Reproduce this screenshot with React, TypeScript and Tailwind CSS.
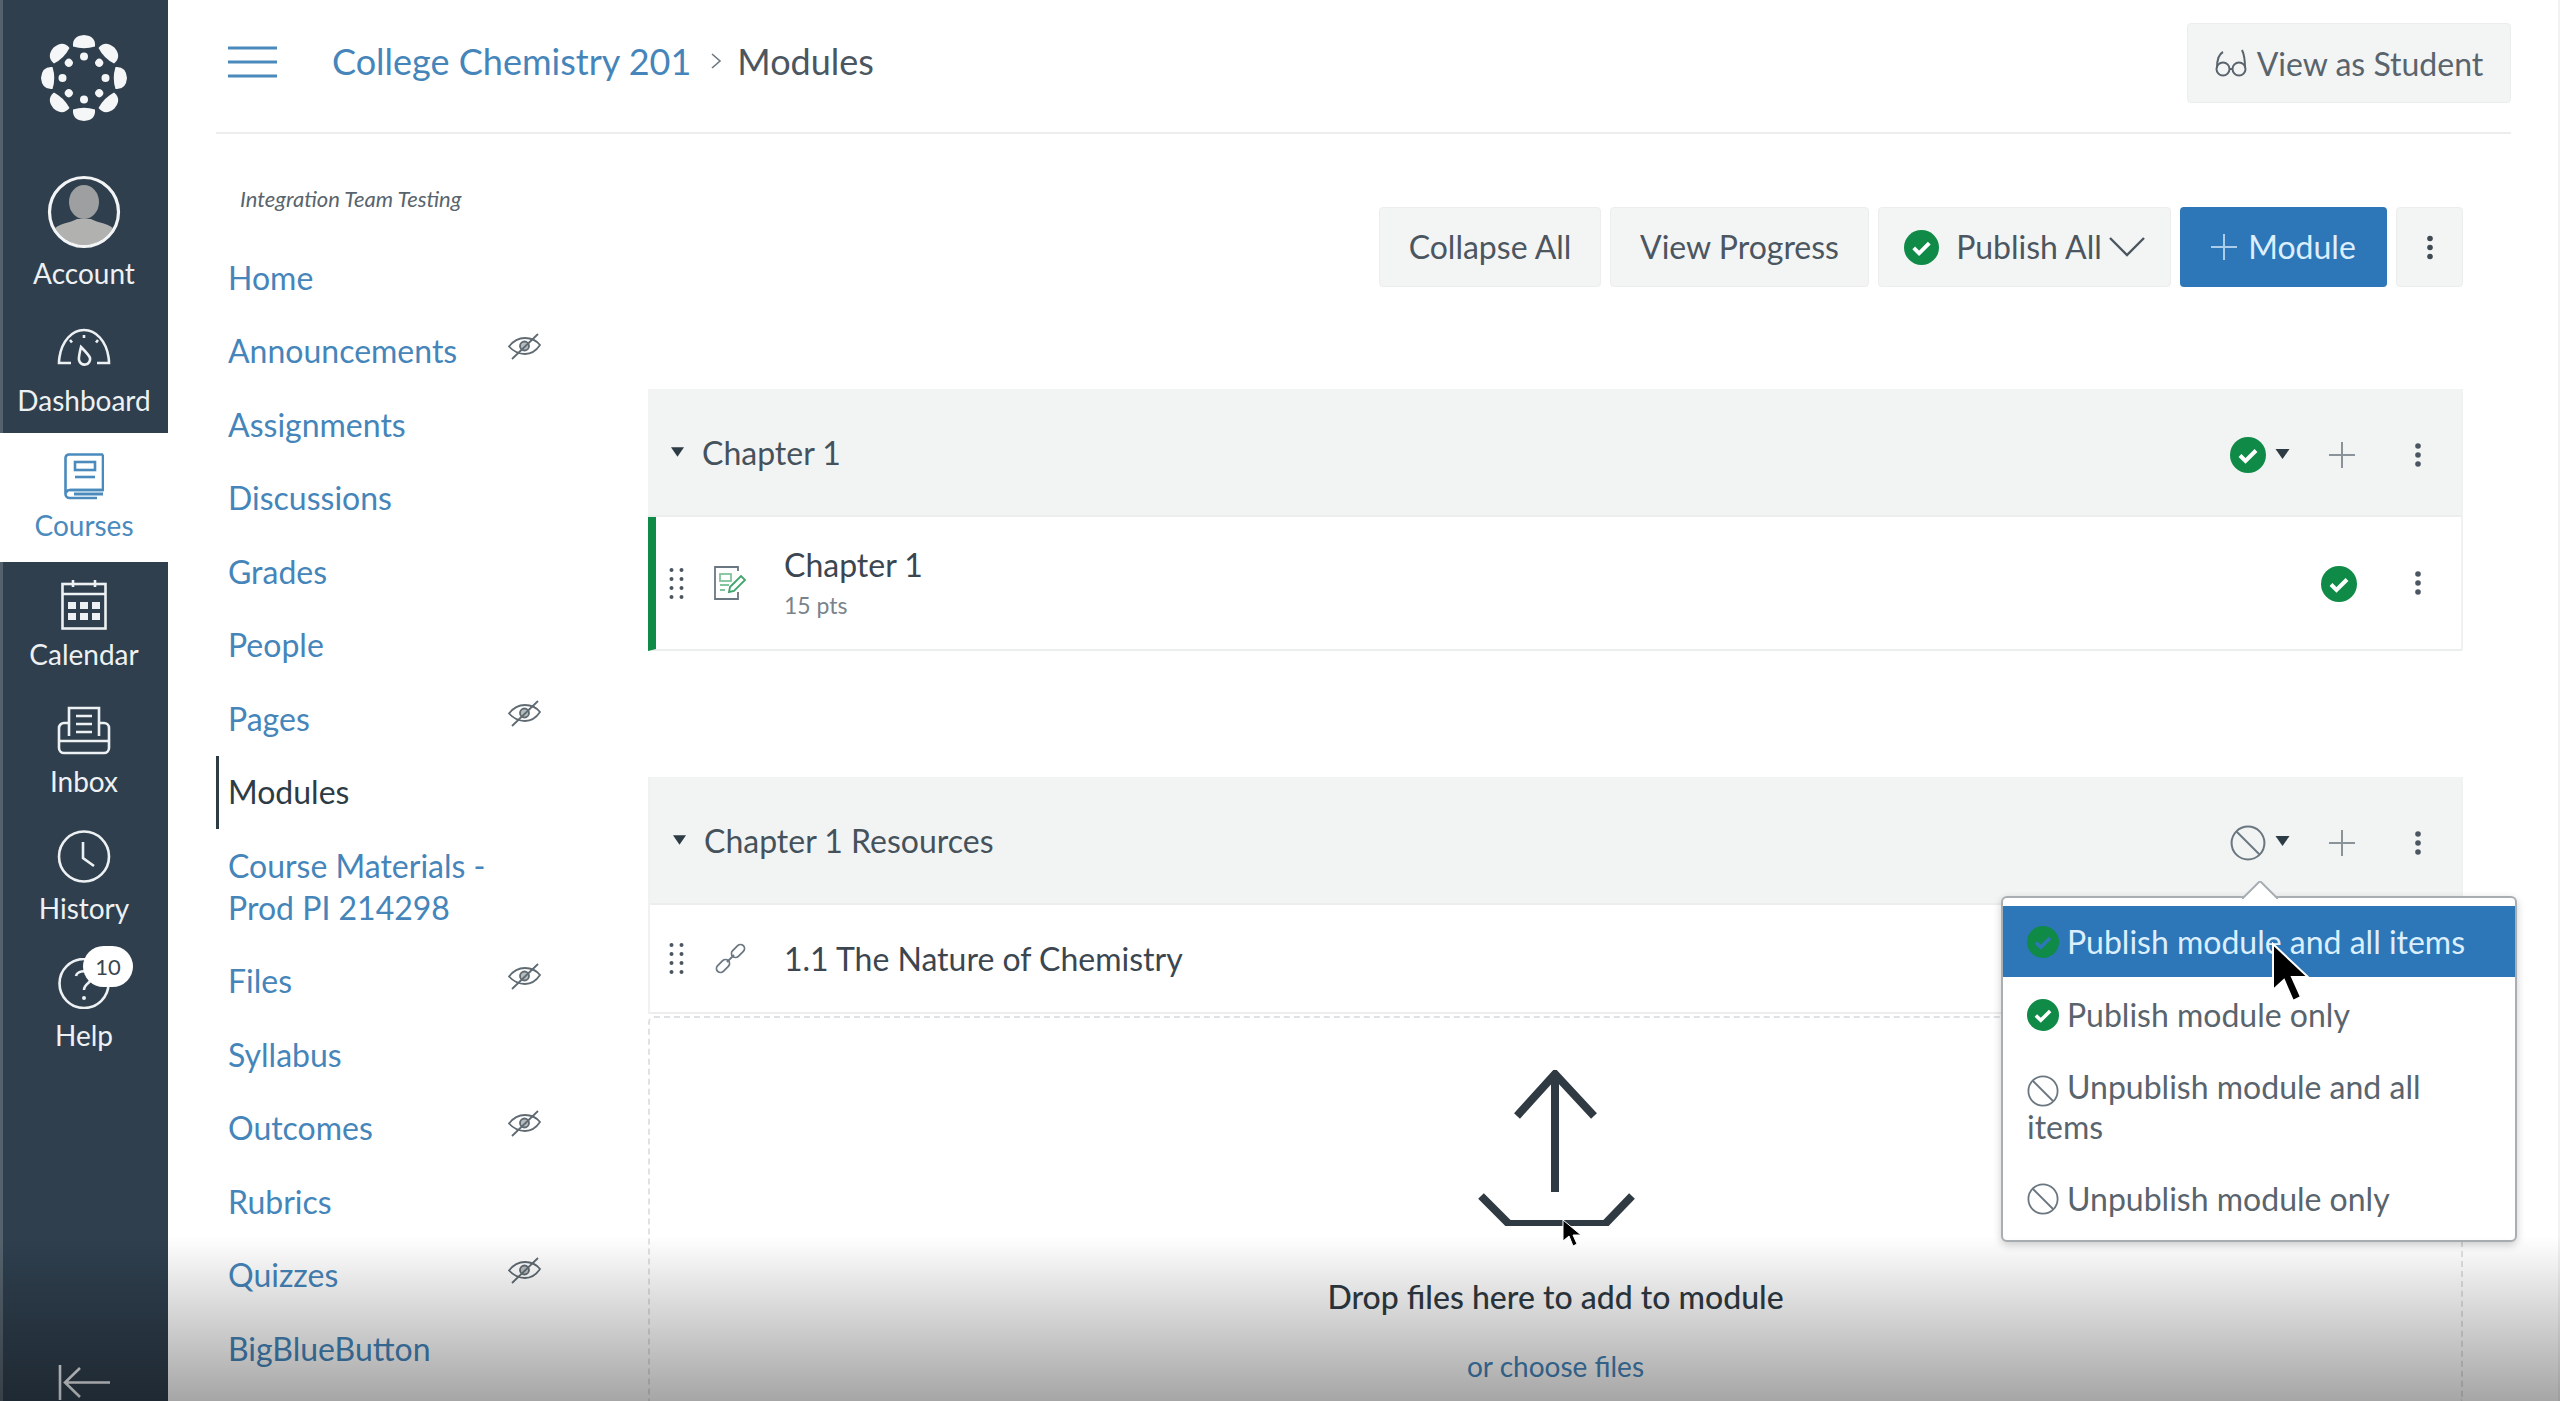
import React from "react";

const font = { fontFamily: "Lato, 'Open Sans', sans-serif" };

function CheckCircle({ size = 36, check = "#fff" }: { size?: number; check?: string }) {
  return (
    <svg width={size} height={size} viewBox="0 0 36 36" className="inline-block shrink-0 align-middle">
      <circle cx="18" cy="18" r="18" fill="#0f8a47" />
      <path d="M10 18.5l5.5 5.5L26 13.5" fill="none" stroke={check} strokeWidth="4" />
    </svg>
  );
}

function NoCircle({ size = 32 }: { size?: number }) {
  return (
    <svg width={size} height={size} viewBox="0 0 32 32" className="inline-block shrink-0 align-middle">
      <circle cx="16" cy="16" r="14.6" fill="none" stroke="#6b7780" strokeWidth="1.8" />
      <path d="M6 6l20 20" stroke="#6b7780" strokeWidth="1.8" />
    </svg>
  );
}

function Kebab({ h = 24, color = "#4b5660" }: { h?: number; color?: string }) {
  return (
    <svg width="8" height={h} viewBox="0 0 8 24" className="shrink-0">
      <circle cx="4" cy="3" r="2.8" fill={color} />
      <circle cx="4" cy="12" r="2.8" fill={color} />
      <circle cx="4" cy="21" r="2.8" fill={color} />
    </svg>
  );
}

function Plus({ color = "#8a939a", size = 26 }: { color?: string; size?: number }) {
  return (
    <svg width={size} height={size} viewBox="0 0 26 26" className="shrink-0">
      <path d="M13 0v26M0 13h26" stroke={color} strokeWidth="2" />
    </svg>
  );
}

function Caret({ w = 14, h = 10, color = "#2d3b45" }: { w?: number; h?: number; color?: string }) {
  return (
    <svg width={w} height={h} viewBox="0 0 14 10" className="shrink-0">
      <path d="M0 0h14L7 10z" fill={color} />
    </svg>
  );
}

function Drag() {
  const dots = [3, 12, 21, 30];
  return (
    <svg width="15" height="33" viewBox="0 0 15 33" className="shrink-0">
      {dots.map((y) => (
        <g key={y} fill="#4b5660">
          <circle cx="2.5" cy={y} r="2" />
          <circle cx="12.5" cy={y} r="2" />
        </g>
      ))}
    </svg>
  );
}

function EyeOff() {
  return (
    <svg width="33" height="27" viewBox="0 0 33 27" className="-mt-[10px] shrink-0" fill="none" stroke="#5f6a72" strokeWidth="1.8">
      <path d="M1 13.5C6 7 11 5 17 5s11 2 15 7c-4 6-9 9-15 9S6 19 1 13.5z" />
      <circle cx="16.5" cy="13" r="4.5" fill="#5f6a72" fillOpacity="0.45" />
      <path d="M4 26L30 1" />
    </svg>
  );
}

function CanvasLogo() {
  const a = [0, 45, 90, 135, 180, 225, 270, 315];
  return (
    <svg width="86" height="86" viewBox="-43 -43 86 86">
      {a.map((d) => (
        <g key={d} transform={`rotate(${d})`} fill="#f4f6f7">
          <path d="M-11-31.500Q-12-42 0-43Q12-42 11-31.500Q0-28-11-31.500z" />
          <circle cx="0" cy="-21.5" r="4" />
        </g>
      ))}
    </svg>
  );
}

function Avatar() {
  return (
    <svg width="74" height="74" viewBox="0 0 74 74">
      <defs>
        <clipPath id="avatar-clip">
          <circle cx="37" cy="37" r="33" />
        </clipPath>
      </defs>
      <g clipPath="url(#avatar-clip)">
        <ellipse cx="37" cy="27" rx="15" ry="17" fill="#9d9fa0" />
        <path d="M6 74V56c4-8 18-8 24-12h14c6 4 20 4 24 12v18z" fill="#b1b1b0" />
      </g>
      <circle cx="37" cy="37" r="34.5" fill="none" stroke="#f2f4f5" strokeWidth="3.2" />
    </svg>
  );
}

const iconStroke = { fill: "none", stroke: "#eef1f3", strokeWidth: 2.6 };

function DashboardIcon() {
  return (
    <svg width="54" height="38" viewBox="0 0 54 38" {...iconStroke}>
      <path d="M14 35H2c0-2 0-3 .5-6C5 13 15 2 27 2s22 11 24.500 27c.5 3 .5 4 .5 6H40" />
      <path d="M24 19c5 5 8 8 9 11a5.500 5.500 0 0 1-11 2c-.5-3 .5-7 2-13z" />
      <path d="M27 7v3M13 12l2 2.500M41 12l-2 2.500" />
    </svg>
  );
}

function CoursesIcon() {
  return (
    <svg width="40" height="47" viewBox="0 0 40 47" fill="none" stroke="#4a8abd" strokeWidth="2.6">
      <path d="M39 1.500H5a3.500 3.500 0 0 0-3.500 3.500v36A4 4 0 0 0 5.500 45H33" />
      <path d="M39 1.500V37H6a4 4 0 0 0 0 0" />
      <path d="M2 40a4 4 0 0 1 4-3h33" />
      <rect x="11" y="9" width="20" height="8" />
      <path d="M11 24h20" />
      <path d="M10 41h29" strokeWidth="3" />
    </svg>
  );
}

function CalendarIcon() {
  return (
    <svg width="46" height="51" viewBox="0 0 46 51" {...iconStroke}>
      <rect x="1.500" y="5" width="43" height="44.500" />
      <path d="M1.500 15h43M12 1v7M34 1v7" />
      <g fill="#eef1f3" stroke="none">
        {[7, 19, 31].map((x) => (
          <React.Fragment key={x}>
            <rect x={x} y="23" width="8" height="7" />
            <rect x={x} y="34" width="8" height="7" />
          </React.Fragment>
        ))}
      </g>
    </svg>
  );
}

function InboxIcon() {
  return (
    <svg width="54" height="49" viewBox="0 0 54 49" {...iconStroke}>
      <path d="M12 30V2h30v28" />
      <path d="M19 10h16M19 18h16M19 26h16" />
      <path d="M12 17H7a5 5 0 0 0-5 5v20a5 5 0 0 0 5 5h40a5 5 0 0 0 5-5V22a5 5 0 0 0-5-5h-5" />
      <path d="M2 35h50" />
    </svg>
  );
}

function HistoryIcon() {
  return (
    <svg width="54" height="53" viewBox="0 0 54 53" {...iconStroke}>
      <circle cx="27" cy="26.500" r="25" />
      <path d="M26 12v16l11 8" />
    </svg>
  );
}

function HelpIcon() {
  return (
    <div className="relative">
      <svg width="54" height="51" viewBox="0 0 54 51" {...iconStroke}>
        <circle cx="27" cy="25.500" r="24.500" />
        <path d="M19 18c1-6 16-7 16 1 0 6-8 6-8 13" />
        <circle cx="27" cy="40" r="2" fill="#eef1f3" stroke="none" />
      </svg>
      <span className="absolute left-[26px] top-[-12px] flex h-[41px] w-[50px] items-center justify-center rounded-full bg-white text-[22px] text-[#3b4650]">
        10
      </span>
    </div>
  );
}

const globalNav = [
  { label: "Account", icon: <Avatar />, cls: "h-[127px] pb-[20px]", mb: "mb-[11px]" },
  { label: "Dashboard", icon: <DashboardIcon />, cls: "h-[127px] pb-[20px]", mb: "mb-[21px]" },
  { label: "Courses", icon: <CoursesIcon />, cls: "h-[129px] pb-[24px] bg-white text-[#4a8abd]", mb: "mb-[12px]" },
  { label: "Calendar", icon: <CalendarIcon />, cls: "h-[127px] pb-[22px]", mb: "mb-[11px]" },
  { label: "Inbox", icon: <InboxIcon />, cls: "h-[127px] pb-[22px]", mb: "mb-[13px]" },
  { label: "History", icon: <HistoryIcon />, cls: "h-[127px] pb-[22px]", mb: "mb-[12px]" },
  { label: "Help", icon: <HelpIcon />, cls: "h-[127px] pb-[22px]", mb: "mb-[13px]" },
];

const courseNav = [
  { label: "Home" },
  { label: "Announcements", hidden: true },
  { label: "Assignments" },
  { label: "Discussions" },
  { label: "Grades" },
  { label: "People" },
  { label: "Pages", hidden: true },
  { label: "Modules", active: true },
  { label: "Course Materials - Prod PI 214298" },
  { label: "Files", hidden: true },
  { label: "Syllabus" },
  { label: "Outcomes", hidden: true },
  { label: "Rubrics" },
  { label: "Quizzes", hidden: true },
  { label: "BigBlueButton" },
];

function ToolButton({ className, children }: { className: string; children: React.ReactNode }) {
  return (
    <div className={`flex h-[80px] items-center justify-center rounded-[4px] border border-[#eceeee] bg-[#f3f4f4] text-[32px] text-[#4b5660] ${className}`}>
      {children}
    </div>
  );
}

function ModuleHeader({ title, status }: { title: string; status: React.ReactNode }) {
  return (
    <div className="flex h-[128px] items-center border-b-2 border-[#eceeee] bg-[#f2f4f4] pl-[23px]">
      <Caret w={13} h={10} />
      <span className="ml-[18px] flex-1 pt-[2px] text-[32px] text-[#46525b]">{title}</span>
      <div className="mt-[5px] flex items-center">
        {status}
        <div className="ml-[39px]">
          <Plus />
        </div>
        <div className="ml-[59px] mr-[39px] flex">
          <Kebab />
        </div>
      </div>
    </div>
  );
}

function PublishMenu() {
  return (
    <div className="absolute right-[-56px] top-[119px] z-20 h-[346px] w-[516px] rounded-[6px] border-2 border-[#a9aeb2] bg-white pt-[8px] text-[32px] leading-[40px] text-[#59646d] shadow-[0_3px_8px_rgba(0,0,0,0.2)]">
      <svg width="36" height="18" viewBox="0 0 36 18" className="absolute left-[239px] top-[-17px]">
        <path d="M0 18L18 0l18 18" fill="#fff" stroke="#a9aeb2" strokeWidth="2" />
      </svg>
      <div className="flex h-[71px] items-center bg-[#2d77b8] pl-[24px] text-[#dcefff]">
        <CheckCircle size={32} check="#2d77b8" />
        <span className="ml-[8px]">Publish module and all items</span>
      </div>
      <div className="flex h-[75px] items-center pl-[24px]">
        <CheckCircle size={32} />
        <span className="ml-[8px]">Publish module only</span>
      </div>
      <div className="px-[24px] py-[15px]">
        <NoCircle size={32} />
        <span className="ml-[8px]">Unpublish module and all items</span>
      </div>
      <div className="flex h-[74px] items-center pl-[24px]">
        <NoCircle size={32} />
        <span className="ml-[8px]">Unpublish module only</span>
      </div>
    </div>
  );
}

export default function App() {
  return (
    <div className="relative flex h-screen overflow-hidden bg-white shadow-[inset_-2px_0_0_#f1f2f2]" style={font}>
      {/* Global nav */}
      <aside className="flex w-[168px] shrink-0 flex-col bg-[#2f3f4e] text-[28px] leading-[26px] text-[#eef1f3] shadow-[inset_3px_0_0_#55626d]">
        <div className="flex h-[179px] shrink-0 justify-center pt-[35px]">
          <CanvasLogo />
        </div>
        {globalNav.map((item) => (
          <div key={item.label} className={`flex shrink-0 flex-col items-center justify-end ${item.cls}`}>
            <div className={item.mb}>{item.icon}</div>
            <span>{item.label}</span>
          </div>
        ))}
        <div className="mt-auto flex justify-center pb-[1px]">
          <svg width="52" height="35" viewBox="0 0 52 35" fill="none" stroke="#eef1f3" strokeWidth="2.6">
            <path d="M2 0v35M52 17.500H8M22 3L7 17.500 22 32" />
          </svg>
        </div>
      </aside>

      <main className="ml-[48px] mr-[49px] flex min-w-0 flex-1 flex-col">
        {/* Breadcrumb bar */}
        <header className="flex h-[134px] shrink-0 items-center border-b-2 border-[#eceeee] pl-[12px]">
          <svg width="49" height="32" viewBox="0 0 49 32" stroke="#4a8abd" strokeWidth="3" className="-mt-[8px]">
            <path d="M0 2h49M0 16h49M0 30h49" />
          </svg>
          <div className="-mt-[10px] ml-[55px] flex flex-1 items-center text-[36px]">
            <span className="text-[#4585ba]">College Chemistry 201</span>
            <svg width="12" height="16" viewBox="0 0 12 16" fill="none" stroke="#6b7780" strokeWidth="1.6" className="ml-[19px] mr-[15px]">
              <path d="M2 1l8 7-8 7" />
            </svg>
            <span className="text-[#4b5660]">Modules</span>
          </div>
          <div className="-mt-[6px] flex h-[80px] w-[324px] items-center justify-center gap-[10px] rounded-[4px] border border-[#eceeee] bg-[#f3f4f4] pt-[2px] text-[32px] text-[#59646d]">
            <svg width="32" height="30" viewBox="0 0 32 30" fill="none" stroke="#59646d" strokeWidth="2">
              <circle cx="8" cy="20" r="6.500" />
              <circle cx="24" cy="20" r="6.500" />
              <path d="M2 19C2 10 4 5 8 3M30 19c0-9-1-14-3-18M14.500 20h3" />
            </svg>
            <span>View as Student</span>
          </div>
        </header>

        <div className="flex min-h-0 flex-1">
          {/* Course nav */}
          <nav className="w-[432px] shrink-0">
            <div className="pl-[24px] pt-[52px] text-[22px] leading-[26px] text-[#59646d] italic">Integration Team Testing</div>
            <ul className="mt-[29px] w-[325px] text-[32px] leading-[42px]">
              {courseNav.map((item) => (
                <li
                  key={item.label}
                  className={`flex items-center justify-between py-[15.75px] ${
                    item.active ? "border-l-[3px] border-[#2d3b45] pl-[9px] text-[#2d3b45]" : "pl-[12px] text-[#4585ba]"
                  }`}
                >
                  <span className={item.label.startsWith("Course") ? "w-[300px]" : ""}>{item.label}</span>
                  {item.hidden && <EyeOff />}
                </li>
              ))}
            </ul>
          </nav>

          {/* Modules */}
          <section className="flex w-[1815px] shrink-0 flex-col pt-[73px]">
            <div className="flex justify-end gap-[9px]">
              <ToolButton className="w-[222px]">Collapse All</ToolButton>
              <ToolButton className="w-[259px]">View Progress</ToolButton>
              <ToolButton className="w-[293px]">
                <CheckCircle size={35} />
                <span className="ml-[17px]">Publish All</span>
                <svg width="36" height="20" viewBox="0 0 36 20" fill="none" stroke="#4b5660" strokeWidth="2.400" className="ml-[7px]">
                  <path d="M1 1l17 17L35 1" />
                </svg>
              </ToolButton>
              <div className="flex h-[80px] w-[207px] items-center justify-center gap-[11px] rounded-[4px] bg-[#2d77b8] text-[32px] text-[#dcefff]">
                <Plus color="#a9cdea" size={26} />
                <span>Module</span>
              </div>
              <ToolButton className="w-[67px]">
                <Kebab h={29} color="#3f4a53" />
              </ToolButton>
            </div>

            <div className="mt-[102px] border-r-2 border-[#f0f1f2]">
              <ModuleHeader
                title="Chapter 1"
                status={
                  <div className="flex items-start">
                    <CheckCircle size={36} />
                    <div className="ml-[9px] mt-[12px] flex">
                      <Caret w={15} h={10} />
                    </div>
                  </div>
                }
              />
              <div className="flex h-[134px] items-center border-b-2 border-l-[8px] border-[#eceeee] border-l-[#0f8a47] pl-[13px]">
                <Drag />
                <svg width="33" height="34" viewBox="0 0 33 34" fill="none" strokeWidth="1.800" className="ml-[30px]">
                  <path d="M24 5V1H1v32h23v-7" stroke="#6b7780" />
                  <rect x="6" y="8" width="11" height="7" stroke="#7fc49c" />
                  <path d="M6 19h9M6 24h5" stroke="#7fc49c" />
                  <path d="M15 26l1-5 11-11 4 4-11 11z" stroke="#3fa56b" />
                </svg>
                <div className="ml-[37px] flex-1">
                  <div className="-mt-[3px] text-[32px] leading-[40px] text-[#3b4650]">Chapter 1</div>
                  <div className="mt-[6px] text-[23px] leading-[28px] text-[#79838b]">15 pts</div>
                </div>
                <div className="mt-[2px] flex">
                  <CheckCircle size={36} />
                </div>
                <div className="ml-[57px] mr-[39px] flex">
                  <Kebab />
                </div>
              </div>
            </div>

            <div className="relative mt-[126px] border-x-2 border-[#f0f1f2]">
              <ModuleHeader
                title="Chapter 1 Resources"
                status={
                  <div className="flex items-start">
                    <NoCircle size={36} />
                    <div className="ml-[9px] mt-[11px] flex">
                      <Caret w={15} h={10} />
                    </div>
                  </div>
                }
              />
              <div className="flex h-[109px] items-center border-b-2 border-[#eceeee] pl-[19px]">
                <Drag />
                <svg width="33" height="33" viewBox="0 0 33 33" fill="none" stroke="#6b7780" strokeWidth="1.800" className="ml-[30px]">
                  <rect x="1.500" y="20" width="15" height="8" rx="4" transform="rotate(-45 9 24)" />
                  <rect x="16.500" y="5" width="15" height="8" rx="4" transform="rotate(-45 24 9)" />
                  <path d="M13 20l7-7" />
                </svg>
                <span className="ml-[37px] text-[32px] text-[#3b4650]">1.1 The Nature of Chemistry</span>
              </div>
              <PublishMenu />
            </div>

            <div className="mt-[2px] flex min-h-0 flex-1 flex-col items-center rounded-t-[6px] border-2 border-b-0 border-dashed border-[#dfe2e4] pt-[52px]">
              <svg width="157" height="156" viewBox="0 0 157 156" fill="none" stroke="#2f3a43" strokeWidth="8" className="ml-[2px]">
                <path d="M39 46L77 4l39 42M77 6v116" />
                <path d="M3 126l28 28h96l27-28" />
              </svg>
              <div className="mt-[49px] text-[32px] font-medium leading-[44px] text-[#2f3a43]">Drop files here to add to module</div>
              <div className="mt-[29px] text-[28px] leading-[36px] text-[#4585ba]">or choose files</div>
            </div>
          </section>
        </div>
      </main>

      {/* Video player scrim along the bottom edge */}
      <div className="pointer-events-none absolute inset-x-0 bottom-0 z-30 h-[165px] bg-gradient-to-b from-transparent to-black/35" />

      {/* Mouse pointers captured in the recording */}
      <svg width="42" height="62" viewBox="0 0 42 62" className="absolute left-[2271px] top-[942px] z-40">
        <path d="M2 2v46l11-10 9 21 8-4-9-20h16z" fill="#000" stroke="#fff" strokeWidth="2" />
      </svg>
      <svg width="20" height="30" viewBox="0 0 20 30" className="absolute left-[1562px] top-[1219px] z-40">
        <path d="M1 1v21l6-5 4 10 4-2-4-9h8z" fill="#000" stroke="#fff" strokeWidth="1" />
      </svg>
    </div>
  );
}
